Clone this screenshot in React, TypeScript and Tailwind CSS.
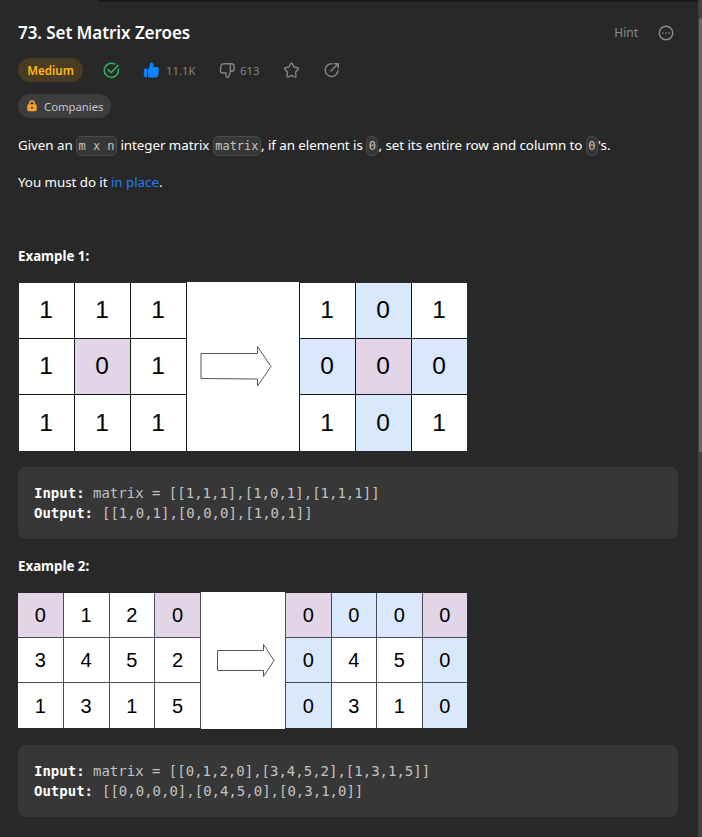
import React from "react";

const P = "bg-[#e1d5e7]";
const B = "bg-[#dae8fc]";
const W = "bg-white";

type Cell = [string, string];

function Code({ children }: { children: React.ReactNode }) {
  return (
    <code className="inline-block h-5 rounded-[5px] border border-[#4a4a4a] bg-[#373737] px-[1.5px] align-[0px] font-['DejaVu_Sans_Mono',monospace] text-[12px] leading-[18px] text-[#c4c4c4]">
      {children}
    </code>
  );
}

function Grid({ rows, side, size }: { rows: Cell[][]; side: "l" | "r"; size: "lg" | "sm" }) {
  const edge = side === "r" ? "border-r" : "border-l";
  const frame =
    size === "lg"
      ? "h-[168px] w-[168px] grid-cols-3 text-[24.5px]"
      : side === "r"
        ? "h-[136px] w-[183px] grid-cols-4 text-[20px]"
        : "h-[136px] w-[182px] grid-cols-4 text-[20px]";
  return (
    <div className={`grid grid-rows-3 font-['Liberation_Sans',Arial,sans-serif] text-black ${frame}`}>
      {rows.flatMap((row, r) =>
        row.map(([value, bg], c) => (
          <div
            key={`${r}-${c}`}
            className={`flex items-center justify-center ${edge} ${r < rows.length - 1 ? "border-b" : ""} ${
              size === "lg" ? "border-[#161616] pt-px pr-px" : "border-[#4b4b50]"
            } ${bg}`}
          >
            <span>{value}</span>
          </div>
        )),
      )}
    </div>
  );
}

function Sample({ input, output }: { input: string; output: string }) {
  return (
    <pre className="h-[72px] w-[660px] rounded-lg bg-[#373737] px-4 pt-4 font-['DejaVu_Sans_Mono',monospace] text-[14px] leading-5 text-[#c3c3c4]">
      <strong className="inline-block w-[59px] text-white">Input: </strong>
      {input}
      {"\n"}
      <strong className="inline-block w-[68px] text-white">Output: </strong>
      {output}
    </pre>
  );
}

export default function App() {
  return (
    <div className="flex h-[837px] w-[702px] overflow-hidden bg-[#282828] font-['Noto_Sans',sans-serif] text-white">
      <div className="flex w-[698px] flex-col">
        <div className="ml-[98px] h-0.5 shrink-0 bg-[#1a1a1a]" />
        <main className="flex flex-col pl-[18px]">
          <header className="mt-[19px] flex h-6 items-center justify-between pr-6">
            <h1 className="whitespace-nowrap text-[17px] font-semibold tracking-[-0.07px]">73. Set Matrix Zeroes</h1>
            <div className="flex items-center gap-[20px] text-[#8c8c8c]">
              <span className="text-[12px]">Hint</span>
              <svg width="16" height="16" viewBox="0 0 16 16" fill="none" stroke="currentColor" strokeWidth="1.4">
                <circle cx="8" cy="8" r="6.8" />
                <g fill="currentColor" stroke="none">
                  <circle cx="4.8" cy="8" r=".85" />
                  <circle cx="8" cy="8" r=".85" />
                  <circle cx="11.2" cy="8" r=".85" />
                </g>
              </svg>
            </div>
          </header>

          <div className="mt-[13px] flex h-6 items-center text-[11.3px] text-[#858585]">
            <span className="flex h-6 w-[65px] items-center justify-center rounded-full bg-[#483d23] pt-px text-[11.6px] font-semibold text-[#ffb81c]">
              Medium
            </span>
            <svg className="ml-[20px]" width="17" height="17" viewBox="0 0 17 17" fill="none" stroke="#2cb55d" strokeWidth="1.5" strokeLinecap="round" strokeLinejoin="round">
              <path d="M11.7 2A7.1 7.1 0 1 0 15.4 7.2" />
              <path d="M5.2 7.6l3 3L15 3.4" />
            </svg>
            <svg className="ml-[23px]" width="17" height="17" viewBox="0 0 17 17" fill="#0a84ff">
              <path d="M6.600 4.500 6.900 1.900C7.100.2 9.300-.1 10.100 1.300c.6 1.100.5 2.300.2 3.600h3.600c1.400 0 2.300 1 2.100 2.300l-.8 6.200c-.2 1.200-1 2-2.200 2H6.300c-.9 0-1.300-.5-1.300-1.300V8.300c0-.6.2-1 .6-1.500z" />
              <path d="M4.200 6.300v9.100H3.100C1.800 15.400.8 14.600.8 13.300V8.800c0-1.500 1-2.500 2.500-2.500z" />
            </svg>
            <span className="ml-1.5 w-[29px] pt-0.5">11.1K</span>
            <svg className="ml-[24px]" width="17" height="17" viewBox="0 0 17 17" fill="none" stroke="currentColor" strokeWidth="1.4" strokeLinejoin="round">
              <path d="M4.500 1.700h7.900c1.700 0 2.600.9 2.600 2.400v3.200c0 1.300-.8 2-2.100 2h-1.400L9.700 14.400c-.6 1.500-2.700 1.200-2.700-.7V11H3.700C2 11 1.200 10 1.400 8.700L2 3.800C2.300 2.300 3 1.700 4.500 1.700zM11.400 1.700v7.600" />
            </svg>
            <span className="ml-[4px] w-[20px] pt-0.5">613</span>
            <svg className="ml-[23px]" width="17" height="17" viewBox="0 0 17 17" fill="none" stroke="currentColor" strokeWidth="1.4" strokeLinejoin="round">
              <path d="M7.700 1.700Q8.500.7 9.300 1.700L10.900 5 14.700 5.700Q15.900 6.100 15.100 7.200L12.500 10.200 13 14Q12.900 15.500 11.500 14.900L8.500 13.500 5.500 14.900Q4.100 15.500 4 14L4.500 10.200 1.900 7.200Q1.100 6.100 2.300 5.700L6.100 5z" />
            </svg>
            <svg className="ml-[24px]" width="16" height="16" viewBox="0 0 16 16" fill="none" stroke="currentColor" strokeWidth="1.4" strokeLinecap="round" strokeLinejoin="round">
              <path d="M8 1.700A6.400 6.400 0 1 0 14 8.300M6.900 9.100l6.800-6.800M10.400 1.700h3.900v3.900" />
            </svg>
          </div>

          <div className="mt-3 flex h-6 w-[93px] items-center rounded-full bg-[#3d3d3d] pl-[9px] text-[11.3px] text-[#c8c8c8]">
            <svg width="10" height="12" viewBox="0 0 10 12" fill="#f5a02c">
              <path d="M2.700 5V3.200a2.300 2.300 0 0 1 4.600 0V5" fill="none" stroke="#f5a02c" strokeWidth="1.5" />
              <rect x=".2" y="4.3" width="9.6" height="7" rx="1.7" />
              <circle cx="5" cy="7.8" r="1" fill="#3d3d3d" />
            </svg>
            <span className="ml-[7px] pt-0.5">Companies</span>
          </div>

          <p className="mt-[16px] h-[22px] whitespace-nowrap text-[13.35px] leading-[22px] tracking-[-0.04px]">
            Given an <Code>m x n</Code> integer matrix <Code>matrix</Code>, if an element is <Code>0</Code>, set its
            entire row and column to <Code>0</Code>'s.
          </p>
          <p className="mt-[15px] h-[22px] text-[13.35px] leading-[22px] tracking-[-0.04px]">
            You must do it <span className="text-[#1a7ff0]">in place</span>.
          </p>

          <h2 className="mt-[52px] h-[22px] text-[13.3px] font-bold leading-[22px]">Example 1:</h2>
          <div className="ml-px mt-[15px] flex h-[169px] items-center">
            <Grid
              side="r"
              size="lg"
              rows={[
                [["1", W], ["1", W], ["1", W]],
                [["1", W], ["0", P], ["1", W]],
                [["1", W], ["1", W], ["1", W]],
              ]}
            />
            <svg className="bg-white" width="112" height="169" viewBox="0 0 112 169" fill="none" stroke="#555" strokeWidth="1">
              <path d="M14 71.500H70.500V64.500L84 84.500 70.500 104V97L14 96.500z" />
            </svg>
            <Grid
              side="l"
              size="lg"
              rows={[
                [["1", W], ["0", B], ["1", W]],
                [["0", B], ["0", P], ["0", B]],
                [["1", W], ["0", B], ["1", W]],
              ]}
            />
          </div>
          <div className="mt-4">
            <Sample input="matrix = [[1,1,1],[1,0,1],[1,1,1]]" output="[[1,0,1],[0,0,0],[1,0,1]]" />
          </div>

          <h2 className="mt-4 h-[22px] text-[13.3px] font-bold leading-[22px]">Example 2:</h2>
          <div className="mt-[15px] flex h-[137px] items-center">
            <Grid
              side="r"
              size="sm"
              rows={[
                [["0", P], ["1", W], ["2", W], ["0", P]],
                [["3", W], ["4", W], ["5", W], ["2", W]],
                [["1", W], ["3", W], ["1", W], ["5", W]],
              ]}
            />
            <svg className="bg-white" width="84" height="137" viewBox="0 0 84 137" fill="none" stroke="#555" strokeWidth="1">
              <path d="M16.500 58.500H62.500V52.500L73 68.500 62.500 84.500V78.500H16.500z" />
            </svg>
            <Grid
              side="l"
              size="sm"
              rows={[
                [["0", P], ["0", B], ["0", B], ["0", P]],
                [["0", B], ["4", W], ["5", W], ["0", B]],
                [["0", B], ["3", W], ["1", W], ["0", B]],
              ]}
            />
          </div>
          <div className="mt-4">
            <Sample input="matrix = [[0,1,2,0],[3,4,5,2],[1,3,1,5]]" output="[[0,0,0,0],[0,4,5,0],[0,3,1,0]]" />
          </div>
        </main>
      </div>
      <div className="flex w-1 flex-col bg-[#424242] pl-px">
        <div className="mt-[18px] h-[434px] w-full rounded-t-sm bg-[#686868]" />
      </div>
    </div>
  );
}
